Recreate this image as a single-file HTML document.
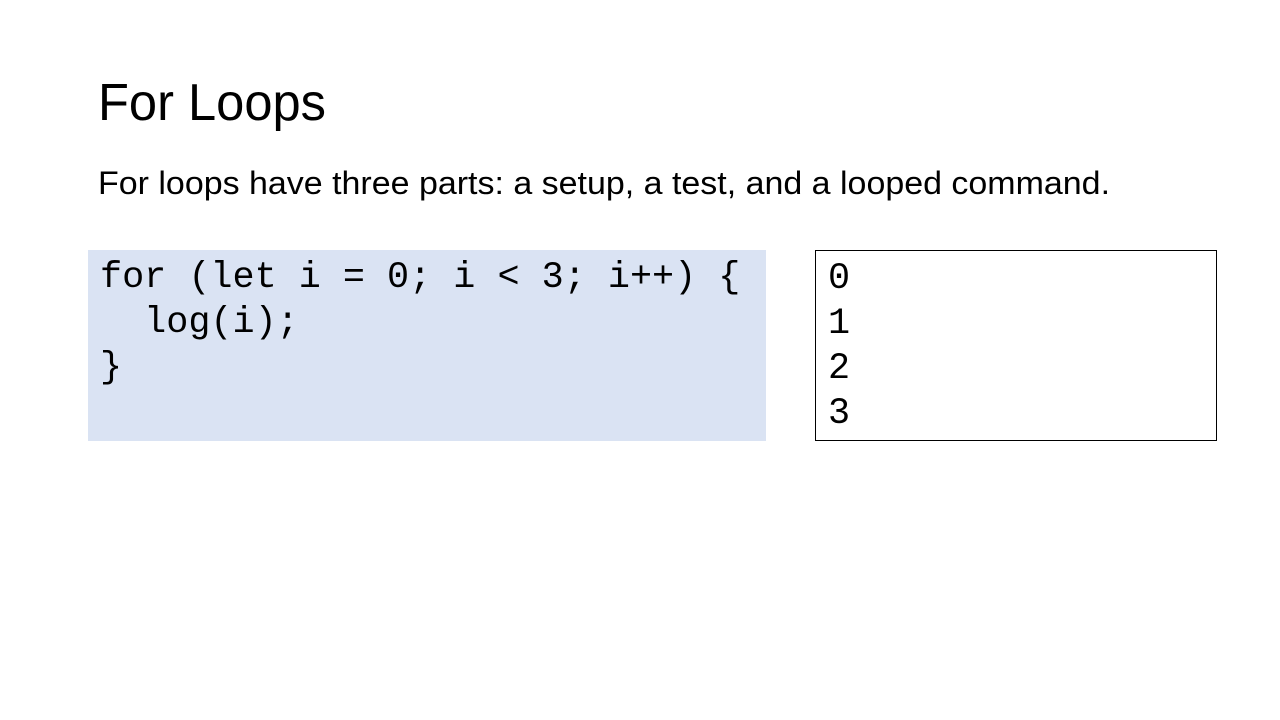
<!DOCTYPE html>
<html><head><meta charset="utf-8"><style>
body{margin:0;width:1280px;height:720px;background:#fff;position:relative;overflow:hidden;font-family:"Liberation Sans",sans-serif;color:#000}
.t{position:absolute;white-space:nowrap;transform-origin:0 0;line-height:1}
#title{left:98px;top:77px;font-size:52px}
#sub{left:98px;top:167px;font-size:32px}
.code{position:absolute;left:88px;top:250px;width:678px;height:191px;background:#dae3f3}
.out{position:absolute;left:815px;top:250px;width:400px;height:189px;border:1px solid #000}
pre{margin:0;font-family:"Liberation Mono",monospace;font-size:36.8px;line-height:45px;position:absolute}
</style></head><body>
<div id="title" class="t" data-w="228">For Loops</div>
<div id="sub" class="t" data-w="1012">For loops have three parts: a setup, a test, and a looped command.</div>
<div class="code"><pre style="left:12px;top:6px">for (let i = 0; i &lt; 3; i++) {
  log(i);
}</pre></div>
<div class="out"><pre style="left:12px;top:6px">0
1
2
3</pre></div>
<script>
document.querySelectorAll('.t').forEach(function(e){var w=+e.getAttribute('data-w');var r=e.getBoundingClientRect().width;if(r>0)e.style.transform='scaleX('+(w/r)+')';});
</script>
</body></html>
